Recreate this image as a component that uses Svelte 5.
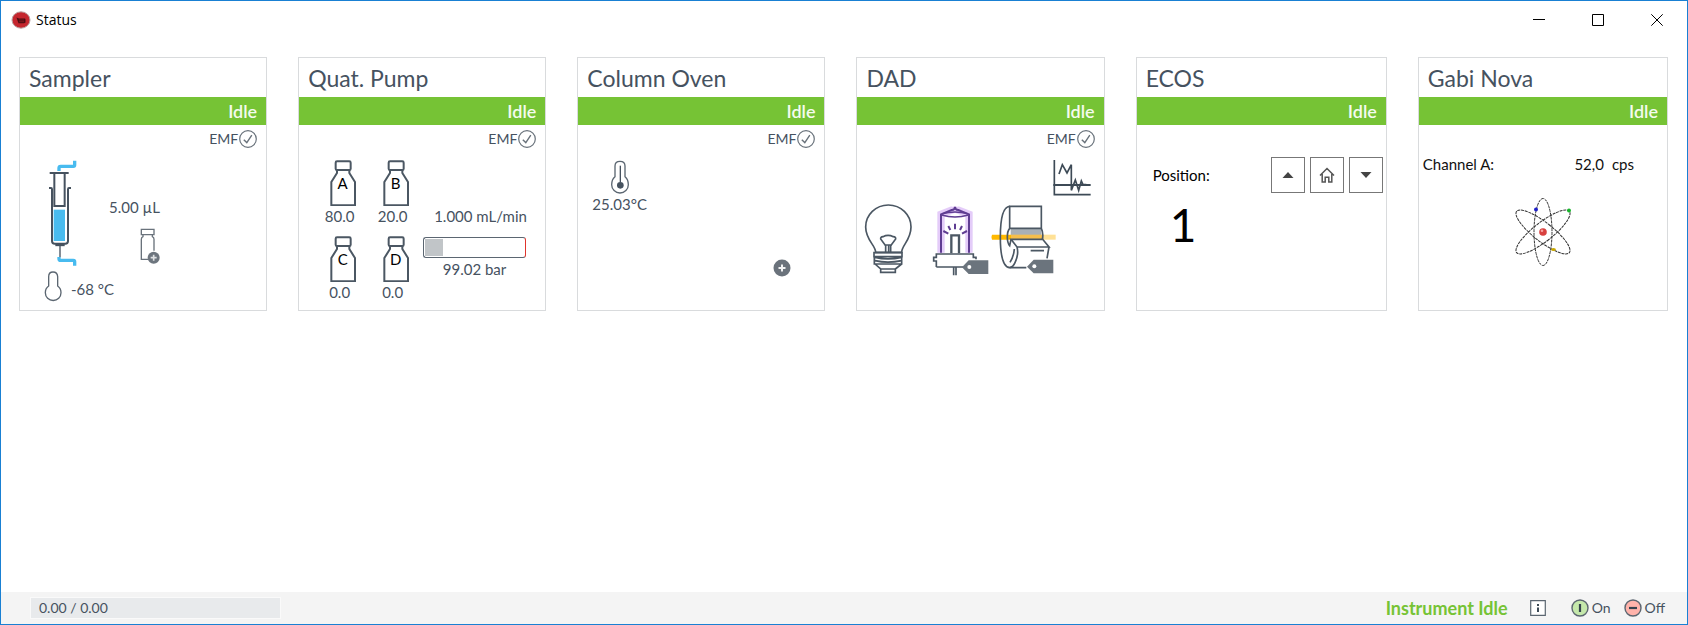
<script lang="ts">
  interface Bottle {
    name: string;
    percent: string;
  }

  const bottles: Bottle[] = [
    { name: 'A', percent: '80.0' },
    { name: 'B', percent: '20.0' },
    { name: 'C', percent: '0.0' },
    { name: 'D', percent: '0.0' }
  ];

  const pressure = 99.02;
  const maxPressure = 560;

  let position = $state(1);
</script>

{#snippet header(title: string)}
  <h2>{title}</h2>
  <p class="state">Idle</p>
{/snippet}

{#snippet emf()}
  <div class="emf">
    <span>EMF</span>
    <svg width="18" height="18" viewBox="0 0 18 18" aria-hidden="true">
      <circle cx="9" cy="9" r="8.3" fill="none" stroke="#69727b" stroke-width="1.2" />
      <path d="M4.8 9.8 7.8 12.6 12.8 5.2" fill="none" stroke="#69727b" stroke-width="1.4" />
    </svg>
  </div>
{/snippet}

<div class="window">
  <header class="titlebar">
    <svg width="20" height="18" viewBox="0 0 20 18" aria-hidden="true">
      <ellipse cx="10" cy="9" rx="9" ry="8.2" fill="#c4262e" stroke="#b9a3a3" stroke-width="1" />
      <path d="M5.5 6.5 8 7.5h6l.5 1v3l-1.5.8H7.5L6.5 9.5z" fill="#4a0d12" />
      <path d="M8 9h5M8 10.7h5" stroke="#8d1a20" stroke-width=".8" />
    </svg>
    <h1>Status</h1>
    <div class="controls">
      <button aria-label="Minimize">
        <svg width="12" height="12" viewBox="0 0 12 12"><path d="M0 5.5h12" /></svg>
      </button>
      <button aria-label="Maximize">
        <svg width="12" height="12" viewBox="0 0 12 12"><path d="M.5.5h11v11H.5z" /></svg>
      </button>
      <button aria-label="Close">
        <svg width="12" height="12" viewBox="0 0 12 12"><path d="M.3.3 11.7 11.7M11.7.3.3 11.7" /></svg>
      </button>
    </div>
  </header>

  <main>
    <section class="card">
      {@render header('Sampler')}
      {@render emf()}
      <div class="sampler">
        <div class="injection">
          <svg width="34" height="106" viewBox="102 58 102 318" aria-hidden="true">
            <path d="M131 207h34v94h-34z" fill="#48bbef" />
            <g fill="none" stroke="#46525f">
              <path d="M119 97h57" stroke-width="6" />
              <path d="M133 98v98h31V98" stroke-width="6" />
              <path d="M117 142h6q3 0 3 4v155q0 8 8 8h32q8 0 8-8V146q0-4 3-4h6" stroke-width="6" />
              <path d="M136 313h28" stroke-width="7" />
              <path d="M150 316v34" stroke-width="4" />
            </g>
            <path
              d="M147 91V82q0-5 5-5h38q4 0 4-4V60M147 349v5q0 5 5 5h38q4 0 4 4v12"
              fill="none"
              stroke="#48bbef"
              stroke-width="10"
            />
          </svg>
          <div class="volume">
            <span>5.00 µL</span>
            <svg width="20" height="36" viewBox="387 261 60 108" aria-hidden="true">
              <g fill="none" stroke="#69727b" stroke-width="4">
                <path d="M391 265h38v16h-38zM396 281v6q-5 2-5 8v60h22M424 281v6q5 2 5 8v34" />
              </g>
              <circle cx="428" cy="350" r="18" fill="#6d757e" />
              <path d="M428 341v18M419 350h18" stroke="#dfe1e3" stroke-width="5" />
            </svg>
          </div>
        </div>
        <div class="tray">
          <svg width="18" height="32" viewBox="105 387 54 96" aria-hidden="true">
            <path
              d="M119 435v-28q0-14 13-14t14 14v28q10 7 10 20a23 23 0 0 1-47 0q0-13 10-20z"
              fill="none"
              stroke="#5b6671"
              stroke-width="4"
            />
          </svg>
          <span>-68 °C</span>
        </div>
      </div>
    </section>

    <section class="card">
      {@render header('Quat. Pump')}
      {@render emf()}
      <div class="pump">
        <ul class="bottles">
          {#each bottles as bottle}
            <li>
              <div class="bottle">
                <svg width="26" height="46" viewBox="121 328 78 138" aria-hidden="true">
                  <g fill="none" stroke="#4b5763" stroke-width="6">
                    <rect x="138" y="332" width="45" height="26" rx="4" />
                    <path d="M142 358v9l-17 27v70h71v-70l-17-27v-9" />
                  </g>
                </svg>
                <span>{bottle.name}</span>
              </div>
              <span class="percent">{bottle.percent}</span>
            </li>
          {/each}
        </ul>
        <div class="flow">
          <span class="rate">1.000 mL/min</span>
          <div
            class="gauge"
            role="meter"
            aria-label="Pressure"
            aria-valuenow={pressure}
            aria-valuemin="0"
            aria-valuemax={maxPressure}
          >
            <div style:width="{(pressure / maxPressure) * 100}%"></div>
          </div>
          <span>{pressure} bar</span>
        </div>
      </div>
    </section>

    <section class="card">
      {@render header('Column Oven')}
      {@render emf()}
      <div class="oven">
        <div class="temperature">
          <svg width="20" height="34" viewBox="112 328 60 102" aria-hidden="true">
            <path
              d="M127 378v-32q0-14 15-14t15 14v32q10 8 10 24a25 25 0 0 1-50 0q0-16 10-24z"
              fill="none"
              stroke="#5b6671"
              stroke-width="4"
            />
            <path d="M143 345v50" stroke="#46525f" stroke-width="4" />
            <circle cx="143" cy="404" r="10" fill="#46525f" />
          </svg>
          <span>25.03°C</span>
        </div>
        <button class="add" aria-label="Add column">
          <svg width="18" height="18" viewBox="0 0 18 18">
            <circle cx="9" cy="9" r="8.5" fill="#6a727b" />
            <path d="M9 5.5v7M5.5 9h7" stroke="#f1f2f3" stroke-width="2" />
          </svg>
        </button>
      </div>
    </section>

    <section class="card">
      {@render header('DAD')}
      {@render emf()}
      <div class="detector">
        <svg class="signal" width="40" height="38" viewBox="606 324 120 114" aria-hidden="true">
          <g fill="none" stroke="#3d4a56">
            <path d="M613 327v104h109" stroke-width="5" />
            <path d="M610 402h112" stroke-width="6" />
            <path d="M627 369l10-28 14 25 13-25v77l12-31 10 31 8-28 5 11h10" stroke-width="5" />
          </g>
        </svg>
        <div class="lamps">
          <svg width="49" height="70" viewBox="43 70 147 210" aria-hidden="true">
            <g fill="none" stroke="#4b5763" stroke-width="5">
              <path d="M78 215c0-21-30-37-30-76a68 66 0 0 1 136 0c0 39-28 55-28 76z" />
              <path d="M108 215v-20l-15-20q-1-6 7-7 15-8 31 0 8 1 7 7l-15 20v20M104 193h23M117 195v20" />
              <path d="M73 216h84v12H73zM76 230q38 9 80 0M74 230v20h82v-20M76 240q38 9 80 0M76 250l17 15v10h44v-10l19-15M93 265h44" />
            </g>
          </svg>
          <svg width="58" height="72" viewBox="247 68 174 216" aria-hidden="true">
            <g fill="none" stroke="#c48ff2" opacity=".45">
              <path d="M274 214V99l32-13q10-1 10-10 0 9 10 10l32 13v115" stroke-width="22" />
              <path d="M274 214V99l32-13q10-1 10-10 0 9 10 10l32 13v115" stroke-width="13" />
            </g>
            <g fill="none" stroke="#5f3d92" stroke-width="6">
              <path d="M274 214V99l32-13q10-1 10-10 0 9 10 10l32 13v115" />
              <path d="M276 101q40 12 80 0M279 97q37-10 74 0" stroke-width="4" />
              <path d="M316 127v17M296 134l6 12M337 134l-6 12M281 149l15 8M352 149l-15 8" />
            </g>
            <g fill="none" stroke="#4b5763" stroke-width="5">
              <path d="M305 216v-54h23v54" stroke-width="7" />
              <path d="M260 257v-18h-8v-11h8v-10h111v10h8v6M260 257h80M312 258v24M319 258v24" />
            </g>
            <path d="M337 258l20-21h59v41h-59z" fill="#6b747d" />
            <circle cx="359" cy="257" r="6" fill="#fff" />
          </svg>
          <svg width="66" height="70" viewBox="424 70 198 210" aria-hidden="true">
            <path d="M486 144h92v28h-92z" fill="#a9b0b6" />
            <path d="M430 162h57v15h-57q-4-7 0-15z" fill="#ffb900" />
            <path d="M487 162h94v13h-94z" fill="#f5be4c" />
            <path d="M583 162h38v15h-38z" fill="#ffe196" />
            <g fill="none" stroke="#4b5763" stroke-width="5">
              <path d="M483 77q-28 2-28 92t28 92h50" />
              <path d="M483 77h95v66h-95zM483 143q-7 8-7 26t7 26l4-19M578 143q7 15 3 34" />
              <path d="M487 176h95l19 23h-96zM505 199q6 22-6 47-6 14-16 15M601 199l-6 34" />
              <path d="M497 205q-2 23-13 40M546 210h40" />
            </g>
            <path d="M535 258l20-21h59v41h-59z" fill="#6b747d" />
            <circle cx="557" cy="257" r="6" fill="#fff" />
          </svg>
        </div>
      </div>
    </section>

    <section class="card">
      {@render header('ECOS')}
      <div class="ecos">
        <div class="switch">
          <span>Position:</span>
          <div class="buttons">
            <button aria-label="Next position" onclick={() => (position += 1)}>
              <svg width="12" height="8" viewBox="0 0 12 8"><path d="M6 1l5.5 6H.5z" fill="#444" /></svg>
            </button>
            <button aria-label="Home position" onclick={() => (position = 1)}>
              <svg width="16" height="16" viewBox="0 0 16 16">
                <path
                  d="M1 8.5 8 1.5l7 7M3.2 7v8h3V10.2h3.6V15h3V7"
                  fill="none"
                  stroke="#555"
                  stroke-width="1.5"
                />
              </svg>
            </button>
            <button aria-label="Previous position" onclick={() => (position = Math.max(1, position - 1))}>
              <svg width="12" height="8" viewBox="0 0 12 8"><path d="M6 7l5.5-6H.5z" fill="#444" /></svg>
            </button>
          </div>
        </div>
        <output>{position}</output>
      </div>
    </section>

    <section class="card">
      {@render header('Gabi Nova')}
      <div class="gabi">
        <div class="channel">
          <span>Channel A:</span>
          <span class="counts">52,0</span>
          <span>cps</span>
        </div>
        <svg width="56" height="70" viewBox="0 0 56 70" aria-hidden="true">
          <g fill="none" stroke="#333" stroke-width="1" stroke-dasharray="3 .8">
            <ellipse cx="28" cy="35" rx="9" ry="33.5" />
            <ellipse cx="28" cy="35" rx="9.5" ry="33.5" transform="rotate(52 28 35)" />
            <ellipse cx="28" cy="35" rx="9.5" ry="33.5" transform="rotate(-52 28 35)" />
          </g>
          <circle cx="28" cy="35" r="3.8" fill="#d8413f" />
          <circle cx="27" cy="33.8" r="1.3" fill="#f6a3a0" />
          <circle cx="21" cy="12.5" r="2" fill="#2020c8" />
          <circle cx="54" cy="13.5" r="2" fill="#17b52b" />
          <ellipse cx="38.5" cy="52.5" rx="2.4" ry="1.5" fill="#c9a800" />
        </svg>
      </div>
    </section>
  </main>

  <footer>
    <div class="runtime">0.00 / 0.00</div>
    <strong>Instrument Idle</strong>
    <button class="info" aria-label="Instrument information">
      <svg width="16" height="16" viewBox="0 0 16 16">
        <path d="M.7.7h14.6v14.6H.7z" fill="#fff" stroke="#5b6671" stroke-width="1.2" />
        <path d="M7 4h2v2H7zM7 7.5h2V12H7z" fill="#3d4a56" />
      </svg>
    </button>
    <button class="power">
      <svg width="18" height="18" viewBox="0 0 18 18">
        <circle cx="9" cy="9" r="8" fill="#c5e8ab" stroke="#5c6670" stroke-width="1.4" />
        <path d="M9 5v8" stroke="#35424e" stroke-width="2.2" />
      </svg>
      On
    </button>
    <button class="power">
      <svg width="18" height="18" viewBox="0 0 18 18">
        <circle cx="9" cy="9" r="8" fill="#ffb3ab" stroke="#5c6670" stroke-width="1.4" />
        <path d="M5 9h8" stroke="#35424e" stroke-width="2.2" />
      </svg>
      Off
    </button>
  </footer>
</div>

<style>
  :global(body) {
    margin: 0;
  }

  .window {
    box-sizing: border-box;
    min-height: 100vh;
    display: flex;
    flex-direction: column;
    border: 1px solid #1980d3;
    background: #fff;
    color: #46525f;
    font: 15px/18px Lato, Carlito, sans-serif;
  }

  button {
    display: flex;
    align-items: center;
    justify-content: center;
    padding: 0;
    border: 0;
    background: none;
    color: inherit;
    font: inherit;
    cursor: pointer;
  }

  svg {
    display: block;
    flex: none;
  }

  .titlebar {
    display: flex;
    align-items: center;
    height: 37px;
    padding: 0 1px 0 10px;
  }

  h1 {
    flex: 1;
    margin: 0 0 0 5px;
    color: #000;
    font: 14px/20px 'Open Sans', sans-serif;
  }

  .controls {
    display: flex;

    & button {
      width: 59px;
      height: 37px;
    }

    & path {
      fill: none;
      stroke: #000;
    }
  }

  main {
    flex: 1;
    display: grid;
    grid-template-columns: 248fr 248fr 248fr 248fr 251fr 250fr;
    align-items: start;
    gap: 31px;
    padding: 19px 19px 19px 18px;
  }

  .card {
    box-sizing: border-box;
    min-width: 0;
    min-height: 254px;
    border: 1px solid #d9dbdd;
  }

  h2 {
    margin: 0;
    padding: 6px 9px 5px;
    font-size: 23px;
    font-weight: 400;
    line-height: 28px;
  }

  .state {
    margin: 0;
    padding: 0 9px;
    background: #76c335;
    color: #f4fbee;
    font-size: 18px;
    font-weight: 600;
    line-height: 28px;
    text-align: right;
  }

  .emf {
    display: flex;
    justify-content: flex-end;
    gap: 1px;
    padding: 5px 9px 0;
    font-size: 14px;
  }

  .sampler {
    padding: 12px 0 0 24px;
  }

  .injection {
    display: flex;
    gap: 31px;
  }

  .volume {
    display: flex;
    flex-direction: column;
    align-items: flex-end;
    gap: 12px;
    padding-top: 38px;
  }

  .tray {
    display: flex;
    align-items: center;
    gap: 9px;
    padding-top: 4px;

    & span {
      padding-top: 6px;
    }
  }

  .pump {
    display: flex;
    padding: 12px 0 0 17px;
  }

  .bottles {
    display: grid;
    grid-template-columns: 53px 53px;
    gap: 11px 0;
    margin: 0;
    padding: 0;
    list-style: none;

    & li {
      display: flex;
      flex-direction: column;
      gap: 1px;
    }
  }

  .bottle {
    display: grid;
    justify-items: center;
    align-items: center;
    color: #000;

    & svg,
    & span {
      grid-area: 1 / 1;
    }
  }

  .percent {
    width: 47px;
    text-align: center;
  }

  .flow {
    display: flex;
    flex-direction: column;
    align-items: center;
    padding-top: 47px;
    white-space: nowrap;
  }

  .rate {
    padding-left: 12px;
  }

  .gauge {
    box-sizing: border-box;
    width: 103px;
    height: 21px;
    margin: 12px 0 2px;
    padding: 1px;
    border: 1px solid #5b6671;
    border-right-color: #e0342c;
    border-radius: 3px;

    & div {
      height: 100%;
      background: #c1c5c8;
    }
  }

  .oven {
    display: flex;
    flex-direction: column;
    padding: 12px 33px 0 14px;
  }

  .temperature {
    align-self: flex-start;
    display: flex;
    flex-direction: column;
    align-items: center;
    gap: 1px;
  }

  .add {
    align-self: flex-end;
    margin-top: 46px;
  }

  .detector {
    padding: 11px 4px 0 7px;
  }

  .signal {
    margin: 0 8px 0 auto;
  }

  .lamps {
    display: flex;
    align-items: flex-start;
    padding-top: 7px;

    & svg:first-child {
      margin-right: 19px;
    }
  }

  .ecos {
    padding: 32px 3px 0 16px;
    color: #000;
  }

  .switch {
    display: flex;
    align-items: center;
    justify-content: space-between;
  }

  .buttons {
    display: flex;
    gap: 5px;

    & button {
      box-sizing: border-box;
      width: 34px;
      height: 36px;
      border: 1px solid #777;
    }
  }

  output {
    display: block;
    padding: 4px 0 0 17px;
    font-size: 46px;
    line-height: 56px;
  }

  .gabi {
    display: flex;
    flex-direction: column;
    align-items: center;
    gap: 24px;
    padding: 30px 33px 0 4px;
    color: #111;

    & svg {
      margin-left: 29px;
    }
  }

  .channel {
    align-self: stretch;
    display: flex;
    gap: 8px;
  }

  .counts {
    margin-left: auto;
  }

  footer {
    display: flex;
    align-items: center;
    height: 32px;
    padding: 0 22px 0 30px;
    background: #f4f4f4;
    font-size: 14px;
  }

  .runtime {
    width: 241px;
    margin-right: auto;
    padding-left: 8px;
    background: #e8eaec;
    line-height: 20px;
    outline: 1px solid #fafafa;
  }

  strong {
    color: #76c335;
    font-size: 18px;
  }

  .info {
    margin: 0 25px 0 22px;
  }

  .power {
    gap: 3px;
  }

  .power + .power {
    margin-left: 13px;
  }
</style>
